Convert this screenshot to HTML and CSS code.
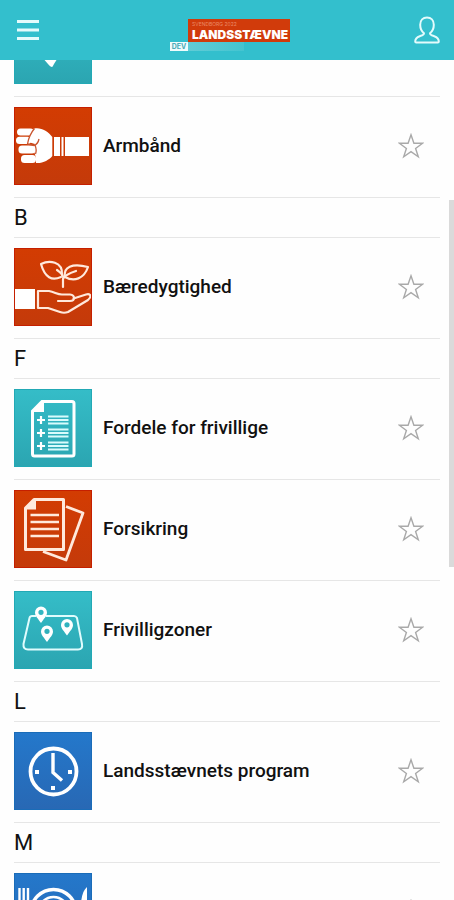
FILE: index.html
```html
<!DOCTYPE html>
<html lang="da">
<head>
<meta charset="utf-8">
<meta name="viewport" content="width=device-width, initial-scale=1">
<title>Landsstævne</title>
<link rel="stylesheet" href="styles.css">
</head>
<body>
<svg class="defs" aria-hidden="true">
  <symbol id="star" viewBox="0 0 26 26"><path d="M13 1.8 L15.9 10.2 H24.6 L17.6 15.4 L20.3 23.8 L13 18.7 L5.7 23.8 L8.4 15.4 L1.4 10.2 H10.1 Z" fill="none" stroke="#a9a9a9" stroke-width="1.4"/></symbol>
</svg>
<header class="topbar">
  <button class="icon-button" type="button" aria-label="Menu">
    <svg width="24" height="24" viewBox="0 0 24 24"><path d="M1 3.5H23M1 12H23M1 20.5H23" stroke="#e4fbfc" stroke-width="2.8"/></svg>
  </button>
  <a class="logo" href="#">
    <span class="logo-box"><span class="logo-small">SVENDBORG 2022</span><span class="logo-name">LANDSSTÆVNE</span></span>
    <span class="logo-row"><span class="logo-tag">DEV</span><span class="logo-band"></span></span>
  </a>
  <button class="icon-button" type="button" aria-label="Profil">
    <svg width="26" height="28" viewBox="0 0 26 28"><path d="M10 17.2C7.600 15.400 6.200 12.400 6.200 8.800C6.200 4.200 9 1.500 13 1.500S19.800 4.200 19.800 8.800C19.800 12.400 18.400 15.400 16 17.200C15.800 19 17.500 19.400 20.200 20.200C23.500 21.200 24.800 22.400 24.800 25.600Q24.800 26.600 23.800 26.600H2.200Q1.200 26.600 1.200 25.600C1.200 22.400 2.500 21.200 5.800 20.200C8.500 19.400 10.200 19 10 17.200Z" fill="none" stroke="#e4fbfc" stroke-width="2"/></svg>
  </button>
</header>
<main class="content">
  <ul class="list">
    <li class="item">
      <a class="entry" href="#" aria-label="Kort"><svg class="tile teal" viewBox="0 0 78 78"><path d="M39 62C38 62 36.500 61 35 59L28 51C22 44 20 38 20 32a17 17 0 0 1 34 0C54 38 52 44 46 51L41 59C40 61 39.500 62 39 62Z" fill="#fff" transform="translate(-1 -1)"/></svg></a>
      <button class="fav" type="button" aria-label="Favorit"><svg><use href="#star"/></svg></button>
    </li>
    <li class="item">
      <a class="entry" href="#">
        <svg class="tile red" viewBox="0 0 78 78">
          <g fill="#fff">
            <path d="M20 21.500C27 20 34 24 38.300 30V49C35 53 29 56.500 22 56V51C20 44 19 40 21 37L14 35C16 28 18 23 20 21.500Z"/>
            <rect x="3" y="21.500" width="17" height="7" rx="3.500"/>
            <rect x="2" y="29.700" width="15" height="7.300" rx="3.500"/>
            <rect x="4.500" y="38.500" width="17" height="8" rx="3.500"/>
            <rect x="7" y="48" width="15" height="8" rx="3.500"/>
            <path d="M40 30h6v19h-6zM47.500 30h2v19h-2zM51 30h24v19h-24z"/>
          </g>
          <path d="M20.500 21.500Q15 28 13.500 37L20 38.500Q24 37 25 32M21 38Q23 43 21.500 47" fill="none" stroke="#c9552f" stroke-width="1.300"/>
        </svg>
        <span class="name">Armbånd</span>
      </a>
      <button class="fav" type="button" aria-label="Favorit: Armbånd"><svg><use href="#star"/></svg></button>
    </li>
    <li class="letter"><h2>B</h2></li>
    <li class="item">
      <a class="entry" href="#">
        <svg class="tile red" viewBox="0 0 78 78">
          <path d="M0 41H21V61H0Z" fill="#fff"/>
          <g fill="none" stroke="#ffe9dc" stroke-width="2.200" stroke-linejoin="round" stroke-linecap="round">
            <path d="M24 43H35C41 44 43 46.500 48 46.500H56Q60 47 60 50Q60 53 56 53H44M59.500 50.500L72 46.500Q76 45.500 76.500 48Q76.500 50 74 52L54 64Q50 65.500 46 64L34 60H24V43"/>
            <path d="M49 39V31M49 31C50 29 49 26 43 22M49 31C50 28 56 25 62 23"/>
            <path d="M47 29C38 33 31 30 27 16C35 12 49 13 48 27M51 29C49 19 58 15 74 19C70 31 60 34 51 29"/>
          </g>
        </svg>
        <span class="name">Bæredygtighed</span>
      </a>
      <button class="fav" type="button" aria-label="Favorit: Bæredygtighed"><svg><use href="#star"/></svg></button>
    </li>
    <li class="letter"><h2>F</h2></li>
    <li class="item">
      <a class="entry" href="#">
        <svg class="tile teal" viewBox="0 0 78 78">
          <path d="M28 12.500H58Q60 12.500 60 14.500V65Q60 67 58 67H20.500Q18.500 67 18.500 65V22Z" fill="none" stroke="#fff" stroke-width="3"/>
          <path d="M18 23L28 12H30V23Z" fill="#fff"/>
          <path d="M23 31H31M27 27V35M23 44H31M27 40V48M23 57H31M27 53V61" stroke="#fff" stroke-width="2.200"/>
          <path d="M34 27.500H54.500M34 31H54.500M34 34.500H54.500M34 40.500H54.500M34 44H54.500M34 47.500H54.500M34 53.500H54.500M34 57H54.500M34 60.500H54.500" stroke="#d9fbfc" stroke-width="1.800"/>
        </svg>
        <span class="name">Fordele for frivillige</span>
      </a>
      <button class="fav" type="button" aria-label="Favorit: Fordele for frivillige"><svg><use href="#star"/></svg></button>
    </li>
    <li class="item">
      <a class="entry" href="#">
        <svg class="tile red" viewBox="0 0 78 78">
          <g fill="none" stroke="#ffe9dc" stroke-linejoin="round">
            <path d="M52 16.500L69 23L52 70L29 61.500" stroke-width="2.800"/>
            <path d="M20 9.500H49.500V59.500H11.500V18Z" stroke-width="3"/>
            <path d="M16.500 25H45M16.500 32H45M16.500 39H45M16.500 46H45" stroke-width="2.600"/>
          </g>
          <path d="M11 19.500L20 9H22V19.500Z" fill="#ffe9dc"/>
        </svg>
        <span class="name">Forsikring</span>
      </a>
      <button class="fav" type="button" aria-label="Favorit: Forsikring"><svg><use href="#star"/></svg></button>
    </li>
    <li class="item">
      <a class="entry" href="#">
        <svg class="tile teal" viewBox="0 0 78 78">
          <path d="M22 25H18Q16 25 15.500 27L9.500 53Q9 58.500 14 58.500H64Q69 58.500 68 53L63 27Q62 25 60 25H32" fill="none" stroke="#e0fcfd" stroke-width="2"/>
          <g fill="#fff" fill-rule="evenodd">
            <path id="pin" d="M27 32C24 27.500 21 25 21 21.500A6 6 0 0 1 33 21.500C33 25 30 27.500 27 32ZM27 18.700A2.600 2.600 0 1 0 27 23.900A2.600 2.600 0 1 0 27 18.700Z"/>
            <use href="#pin" transform="translate(6 19)"/>
            <use href="#pin" transform="translate(26 12.500)"/>
          </g>
        </svg>
        <span class="name">Frivilligzoner</span>
      </a>
      <button class="fav" type="button" aria-label="Favorit: Frivilligzoner"><svg><use href="#star"/></svg></button>
    </li>
    <li class="letter"><h2>L</h2></li>
    <li class="item">
      <a class="entry" href="#">
        <svg class="tile blue" viewBox="0 0 78 78">
          <circle cx="39.500" cy="39.500" r="23" fill="none" stroke="#fff" stroke-width="3.800"/>
          <path d="M39 21V40.500L48 48.500" fill="none" stroke="#fff" stroke-width="3.400"/>
          <path d="M21 38h4v4h-4zM54 38h4v4h-4zM37 54h4v4h-4z" fill="#fff"/>
        </svg>
        <span class="name">Landsstævnets program</span>
      </a>
      <button class="fav" type="button" aria-label="Favorit: Landsstævnets program"><svg><use href="#star"/></svg></button>
    </li>
    <li class="letter"><h2>M</h2></li>
    <li class="item">
      <a class="entry" href="#" aria-label="Mad">
        <svg class="tile blue" viewBox="0 0 78 78">
          <g fill="none" stroke="#fff">
            <circle cx="39.500" cy="39" r="22.500" stroke-width="3.500"/>
            <circle cx="39.500" cy="39" r="15" stroke-width="2.500"/>
            <path d="M5.500 15V27Q5.500 31 9.500 31T14 27V15M9.700 15V64" stroke-width="2.400"/>
          </g>
          <path d="M73 14V64H70V42H67C66 29 68 18 73 14Z" fill="#fff"/>
        </svg>
      </a>
      <button class="fav" type="button" aria-label="Favorit: Mad"><svg><use href="#star"/></svg></button>
    </li>
  </ul>
</main>
<div class="scroll-thumb"></div>
</body>
</html>
```
FILE: styles.css
```css
* { box-sizing: border-box; }

body {
  margin: 0;
  height: 100vh;
  display: flex;
  flex-direction: column;
  overflow: hidden;
  position: relative;
  background: #fefefe;
  color: #111;
  font-family: Roboto, "Liberation Sans", sans-serif;
}

.defs { position: absolute; width: 0; height: 0; }

button {
  padding: 0;
  border: 0;
  background: none;
}

a { color: inherit; text-decoration: none; }

.topbar {
  flex: none;
  height: 60px;
  padding: 0 14px 0 16px;
  display: flex;
  align-items: center;
  justify-content: space-between;
  background: #33bfcd;
}

.icon-button { display: flex; }

.logo {
  display: flex;
  flex-direction: column;
  padding: 10px 0 0 6px;
  color: #fff;
  font-family: Inter, "Open Sans", sans-serif;
}

.logo-box {
  display: flex;
  flex-direction: column;
  margin-left: 18px;
  padding: 2px 2px 0 4px;
  background: #d13b0b;
}

.logo-small {
  font-size: 5px;
  line-height: 6px;
  color: #eb8a68;
}

.logo-name {
  font-size: 12px;
  line-height: 15px;
  font-weight: 900;
}

.logo-row { display: flex; }

.logo-tag {
  width: 18px;
  height: 9px;
  background: #effcfc;
  color: #4aabb8;
  font-size: 7px;
  line-height: 9px;
  font-weight: 700;
  text-align: center;
}

.logo-band {
  width: 56px;
  background: linear-gradient(90deg, #62ccd6, #43c4d0);
}

.content {
  flex: 1;
  min-height: 0;
  overflow: hidden;
}

/* The list is shown part-way through its scroll. */
.list {
  list-style: none;
  margin: -64px 14px 0;
  padding: 0;
}

.item,
.letter {
  display: flex;
  align-items: center;
  border-bottom: 1px solid #e6e6e6;
}

.item {
  justify-content: space-between;
  padding: 10px 16px 12px 0;
}

.letter { height: 40px; }

.letter h2 {
  margin: 0;
  font-size: 22px;
  line-height: 38px;
  font-weight: 400;
}

.entry {
  flex: 1;
  display: flex;
  align-items: center;
  gap: 11px;
}

.name {
  font-size: 19px;
  line-height: 24px;
  font-weight: 500;
}

.tile {
  flex: none;
  width: 78px;
  height: 78px;
}

.red {
  background: linear-gradient(#d33c02, #c43a0a);
  outline: 1px solid #c51f00;
  outline-offset: -1px;
}

.teal {
  background: linear-gradient(#35bdc8, #2ba5b1);
  outline: 1px solid #22a9b5;
  outline-offset: -1px;
}

.blue {
  background: linear-gradient(#2478cb, #2868b4);
  outline: 1px solid #1a6cb8;
  outline-offset: -1px;
}

.fav svg {
  display: block;
  width: 26px;
  height: 26px;
}

.scroll-thumb {
  position: absolute;
  top: 200px;
  right: 0;
  width: 5px;
  height: 367px;
  background: #dadada;
}
```
